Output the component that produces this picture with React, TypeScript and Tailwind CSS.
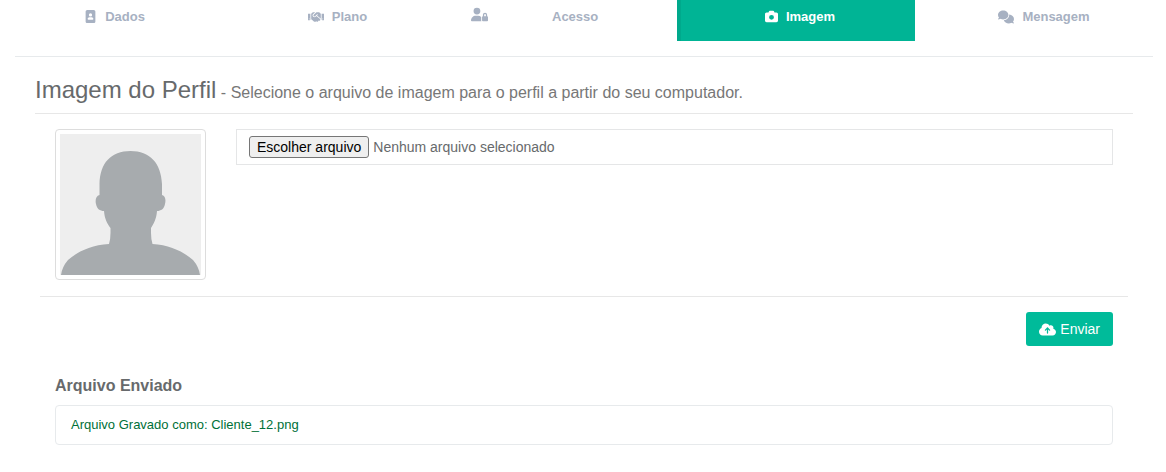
import { useRef, useState } from "react";
import type { ReactNode } from "react";
import { FaHandshake } from "react-icons/fa";
import { FaImagePortrait, FaUserLock, FaCamera, FaComments, FaCloudArrowUp } from "react-icons/fa6";

function Tab({ icon, label, active = false, className = "justify-center gap-2 pt-2" }: { icon: ReactNode; label: string; active?: boolean; className?: string }) {
  return (
    <a
      href="#"
      aria-current={active ? "page" : undefined}
      className={
        "flex h-[41px] items-start text-[13px] leading-[17px] font-bold " +
        className +
        (active ? " bg-[#00b495] text-white" : " text-[#a7b1c2]")
      }
    >
      <span className="flex h-[17px] items-center">{icon}</span>
      <span>{label}</span>
    </a>
  );
}

function Avatar() {
  return (
    <div className="size-[151px] shrink-0 rounded border border-[#dddddd] bg-white p-1">
      <svg viewBox="0 0 141 141" className="block size-full bg-[#eeeeee]" role="img" aria-label="Foto do perfil">
        <path
          fill="#a7abae"
          d="M70.500 17C90 17 101 29 102 50V61C105.500 62 106 66 105 70C104 75 101 77 97 77C96.500 85 93.500 90 91 94V99Q91 105 92.500 110C110 111 124 118 133 126Q139 133 140 141H1Q2 133 8 126C17 118 31 111 49 110Q50.500 105 50.500 99V94C47.500 90 44.500 85 44 77C40 77 37 75 36 70C35 66 36 62 39.500 61V50C40 29 51 17 70.500 17Z"
        />
      </svg>
    </div>
  );
}

function FileField() {
  const input = useRef<HTMLInputElement>(null);
  const [name, setName] = useState("Nenhum arquivo selecionado");
  return (
    <div className="flex h-9 min-w-0 flex-1 items-center gap-1 border border-[#e5e6e7] px-3 text-sm">
      <input
        ref={input}
        type="file"
        aria-label="Arquivo de imagem"
        tabIndex={-1}
        className="hidden"
        onChange={(e) => setName(e.target.files?.[0]?.name ?? "Nenhum arquivo selecionado")}
      />
      <button
        type="button"
        onClick={() => input.current?.click()}
        className="h-[22px] rounded-[3px] border border-[#767676] bg-[#efefef] px-[7px] leading-5 whitespace-nowrap text-black"
      >
        Escolher arquivo
      </button>
      <span className="truncate">{name}</span>
    </div>
  );
}

export default function App() {
  return (
    <div className="bg-white pr-[13px] pb-7 pl-[15px] font-['Liberation_Sans',Arial,sans-serif] text-[#676a6c]">
      <nav className="grid grid-cols-[199fr_247fr_216fr_238fr_238fr] border-b border-[#e7eaec] pb-[15px]">
        <Tab icon={<FaImagePortrait size={13} />} label="Dados" />
        <Tab icon={<FaHandshake size={16} />} label="Plano" />
        <Tab icon={<FaUserLock size={17} className="mb-1" />} label="Acesso" className="gap-16 pt-2 pl-[10px]" />
        <Tab
          icon={<FaCamera size={13} />}
          label="Imagem"
          active
          className="justify-center gap-2 border-l-4 border-[#00a98c] pt-2 pl-1"
        />
        <Tab icon={<FaComments size={16} />} label="Mensagem" className="justify-center gap-2 pt-2 pl-5" />
      </nav>

      <main className="px-5">
        <h2 className="border-b border-[#e7e7e7] pt-[18px] pb-2 text-2xl leading-[30px]">
          Imagem do Perfil
          <small className="text-base text-[#777777]"> - Selecione o arquivo de imagem para o perfil a partir do seu computador.</small>
        </h2>

        <form onSubmit={(e) => e.preventDefault()}>
          <div className="flex gap-[30px] px-5 pt-[15px] pb-4">
            <Avatar />
            <FileField />
          </div>
          <div className="mx-[5px] flex justify-end border-t border-[#e7e7e7] px-[15px] pt-[15px]">
            <button type="submit" className="flex h-[34px] items-center gap-1 rounded-[3px] bg-[#00bb9a] px-[13px] text-sm text-white">
              <FaCloudArrowUp size={17} />
              Enviar
            </button>
          </div>
        </form>

        <section className="px-5 pt-[30px]">
          <h3 className="text-base leading-5 font-bold">Arquivo Enviado</h3>
          <p className="mt-[9px] rounded border border-[#e7eaec] px-[15px] py-[9px] text-[13px] leading-5 text-[#007038]">
            Arquivo Gravado como: Cliente_12.png
          </p>
        </section>
      </main>
    </div>
  );
}
